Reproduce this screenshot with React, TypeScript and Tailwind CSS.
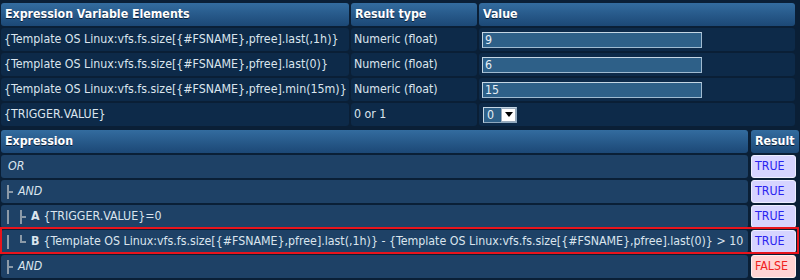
import React from "react";

const font = { fontFamily: '"DejaVu Sans Condensed", "DejaVu Sans", sans-serif' };

function Pipe() {
  return (
    <svg width="8" height="14" className="shrink-0" viewBox="0 0 8 14">
      <rect x="2" y="0" width="2" height="14" fill="#8c9aa8" />
    </svg>
  );
}
function Tee() {
  return (
    <svg width="10" height="14" className="shrink-0" viewBox="0 0 10 14">
      <rect x="2" y="0" width="2" height="14" fill="#8c9aa8" />
      <rect x="2" y="6" width="6" height="2" fill="#8c9aa8" />
    </svg>
  );
}
function Ell() {
  return (
    <svg width="10" height="14" className="shrink-0" viewBox="0 0 10 14">
      <rect x="2" y="0" width="2" height="8" fill="#8c9aa8" />
      <rect x="2" y="6" width="6" height="2" fill="#8c9aa8" />
    </svg>
  );
}

const hdr =
  "h-[23px] rounded-[3px] bg-gradient-to-b from-[#336c9f] to-[#1c4876] text-white font-bold text-[12.3px] flex items-center px-[4px] whitespace-nowrap [text-shadow:0_1px_0_#0a2038]";
const cellDark =
  "h-[23px] rounded-[3px] bg-[#0d2a49] text-[#dbe5ee] text-[12.3px] flex items-center pl-[3px] whitespace-nowrap overflow-hidden";
const cellExp =
  "h-[23px] rounded-[3px] bg-[#1e4166] text-[#dbe5ee] text-[12.3px] flex items-center whitespace-nowrap overflow-hidden";

function Input({ v }: { v: string }) {
  return (
    <div className="w-[220px] h-[16px] bg-[#2e6088] border border-t-[#c4d6e4] border-l-[#c4d6e4] border-r-[#9fbad0] border-b-[#9fbad0] text-[#e6eef5] text-[12.3px] leading-[14px] px-[2px]">
      {v}
    </div>
  );
}

function Res({ t }: { t: boolean }) {
  return t ? (
    <div className="h-[23px] rounded-[3px] bg-[#d6d4ff] border border-[#eeeeff] text-[#2a23f0] text-[12.3px] flex items-center px-[3px]">
      TRUE
    </div>
  ) : (
    <div className="h-[23px] rounded-[3px] bg-[#ffd4d4] border border-[#fff0f0] text-[#f02020] text-[12.3px] flex items-center px-[3px]">
      FALSE
    </div>
  );
}

const rows = [
  ["{Template OS Linux:vfs.fs.size[{#FSNAME},pfree].last(,1h)}", "Numeric (float)", "9"],
  ["{Template OS Linux:vfs.fs.size[{#FSNAME},pfree].last(0)}", "Numeric (float)", "6"],
  ["{Template OS Linux:vfs.fs.size[{#FSNAME},pfree].min(15m)}", "Numeric (float)", "15"],
];

export default function App() {
  return (
    <div className="w-[800px] h-[280px] bg-[#0a1f36] overflow-hidden" style={font}>
      <div className="pt-[3px] pl-[1px] pr-[5px] flex flex-col gap-[2px]">
        <div className="grid grid-cols-[348px_126px_1fr] gap-[2px]">
          <div className={hdr}>Expression Variable Elements</div>
          <div className={hdr}>Result type</div>
          <div className={hdr}>Value</div>
        </div>
        {rows.map((r) => (
          <div key={r[2]} className="grid grid-cols-[348px_126px_1fr] gap-[2px]">
            <div className={cellDark}>{r[0]}</div>
            <div className={cellDark}>{r[1]}</div>
            <div className={cellDark}>
              <Input v={r[2]} />
            </div>
          </div>
        ))}
        <div className="grid grid-cols-[348px_126px_1fr] gap-[2px]">
          <div className={cellDark}>{"{TRIGGER.VALUE}"}</div>
          <div className={cellDark}>0 or 1</div>
          <div className={cellDark}>
            <div className="ml-[1px] h-[16px] flex items-stretch border border-t-[#c4d6e4] border-l-[#c4d6e4] border-r-[#8fa9bf] border-b-[#8fa9bf] bg-[#2e6088]">
              <span className="w-[17px] text-[#e6eef5] text-[12.3px] leading-[14px] pl-[3px]">0</span>
              <span className="w-[15px] bg-white border border-[#9ab] flex items-center justify-center">
                <svg width="8" height="5" viewBox="0 0 8 5">
                  <polygon points="0,0 8,0 4,5" fill="#000" />
                </svg>
              </span>
            </div>
          </div>
        </div>
      </div>

      <div className="mt-[4px] pl-[1px] pr-[4px] flex flex-col gap-[2px]">
        <div className="grid grid-cols-[747px_1fr] gap-[3px]">
          <div className={hdr}>Expression</div>
          <div className={hdr}>Result</div>
        </div>
        <div className="grid grid-cols-[747px_1fr] gap-[3px]">
          <div className={cellExp + " pl-[7px] italic"}>OR</div>
          <Res t />
        </div>
        <div className="grid grid-cols-[747px_1fr] gap-[3px]">
          <div className={cellExp + " pl-[4px]"}>
            <Tee />
            <span className="italic ml-[3px]">AND</span>
          </div>
          <Res t />
        </div>
        <div className="grid grid-cols-[747px_1fr] gap-[3px]">
          <div className={cellExp + " pl-[4px]"}>
            <Pipe />
            <span className="w-[5px]" />
            <Tee />
            <span className="font-bold ml-[3px]">A</span>
            <span className="ml-[4px]">{"{TRIGGER.VALUE}=0"}</span>
          </div>
          <Res t />
        </div>
        <div className="relative grid grid-cols-[747px_1fr] gap-[3px]">
          <div className={cellExp + " pl-[4px]"}>
            <Pipe />
            <span className="w-[5px]" />
            <Ell />
            <span className="font-bold ml-[3px]">B</span>
            <span className="ml-[4px]">
              {"{Template OS Linux:vfs.fs.size[{#FSNAME},pfree].last(,1h)} - {Template OS Linux:vfs.fs.size[{#FSNAME},pfree].last(0)} > 10"}
            </span>
          </div>
          <Res t />
          <div className="absolute left-[-1px] right-[-3px] top-[-3px] bottom-[-1px] border-2 border-[#e8141c] pointer-events-none" />
        </div>
        <div className="grid grid-cols-[747px_1fr] gap-[3px]">
          <div className={cellExp + " pl-[4px]"}>
            <Tee />
            <span className="italic ml-[3px]">AND</span>
          </div>
          <Res t={false} />
        </div>
      </div>
    </div>
  );
}
